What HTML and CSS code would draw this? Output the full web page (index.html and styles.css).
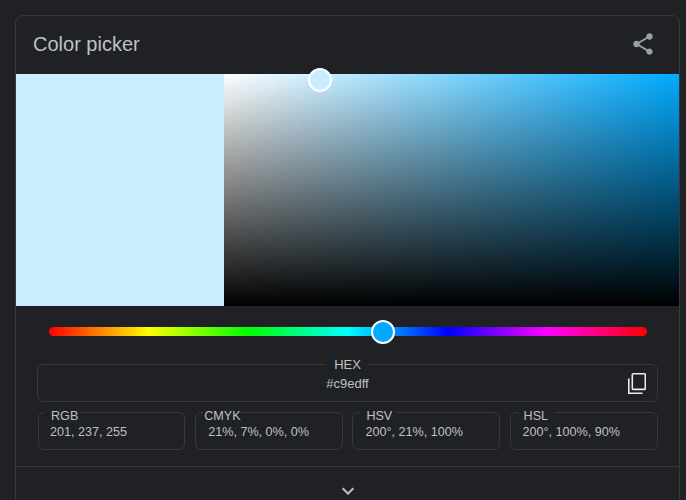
FILE: index.html
```html
<!DOCTYPE html>
<html lang="en">
<head>
<meta charset="utf-8">
<title>Color picker</title>
<link rel="stylesheet" href="styles.css">
</head>
<body>
<section class="card">
  <header class="card-head">
    <h2 class="title">Color picker</h2>
    <svg class="share" viewBox="0 0 24 24"><path d="M18 16.08c-.76 0-1.44.3-1.96.77L8.91 12.7c.05-.23.09-.46.09-.7s-.04-.47-.09-.7l7.05-4.11c.54.5 1.25.81 2.04.81 1.66 0 3-1.34 3-3s-1.34-3-3-3-3 1.34-3 3c0 .24.04.47.09.7L8.04 9.81C7.5 9.31 6.79 9 6 9c-1.66 0-3 1.34-3 3s1.34 3 3 3c.79 0 1.5-.31 2.04-.81l7.12 4.16c-.05.21-.08.43-.08.65 0 1.61 1.31 2.92 2.92 2.92s2.92-1.31 2.92-2.92-1.31-2.92-2.92-2.92z"/></svg>
  </header>
  <div class="picker">
    <div class="swatch"></div>
    <div class="field"><span class="thumb thumb-sat"></span></div>
  </div>
  <div class="hue-wrap">
    <div class="hue"><span class="thumb thumb-hue"></span></div>
  </div>
  <div class="values">
    <fieldset class="box box-hex">
      <legend class="hex-legend">HEX</legend>
      <div class="hex-row">
        <span class="hex-value">#c9edff</span>
        <svg class="copy" viewBox="0 0 18 21"><path d="M.8 5.5v14.7h13.7"/><rect x="4.3" y=".8" width="13" height="15.6" rx=".8"/></svg>
      </div>
    </fieldset>
    <div class="grid">
      <fieldset class="box"><legend class="leg leg-rgb">RGB</legend><div class="val val-rgb">201, 237, 255</div></fieldset>
      <fieldset class="box"><legend class="leg leg-cmyk">CMYK</legend><div class="val">21%, 7%, 0%, 0%</div></fieldset>
      <fieldset class="box"><legend class="leg leg-hsv">HSV</legend><div class="val">200°, 21%, 100%</div></fieldset>
      <fieldset class="box"><legend class="leg leg-hsl">HSL</legend><div class="val">200°, 100%, 90%</div></fieldset>
    </div>
  </div>
  <div class="more">
    <svg class="chev" viewBox="0 0 24 24"><path d="M7.41 8.59 12 13.17l4.59-4.58L18 10l-6 6-6-6z"/></svg>
  </div>
</section>
</body>
</html>
```
FILE: styles.css
```css
* { box-sizing: border-box; }
html, body { height: 100%; }
body {
  margin: 0;
  padding: 15px 6px 0 15px;
  background: #202124;
  color: #bdc1c6;
  font-family: "Liberation Sans", Arial, sans-serif;
  font-size: 13px;
  overflow: hidden;
}
.card {
  border: 1px solid #36383b;
  border-radius: 8px;
  background: #202124;
  height: 520px;
}
.card-head {
  height: 58px;
  display: flex;
  align-items: center;
  justify-content: space-between;
  padding: 0 23px 2px 17px;
}
.title { margin: 0; font-size: 20px; font-weight: 400; color: #bdc1c6; }
.share { width: 26px; height: 26px; fill: #9aa0a6; }
.picker { display: flex; height: 232px; }
.swatch { width: 208px; background: #c9edff; }
.field {
  flex: 1;
  position: relative;
  background: linear-gradient(to top, #000, rgba(0,0,0,0)), linear-gradient(to right, #fff, #00aaff);
}
.thumb {
  position: absolute;
  width: 24px;
  height: 24px;
  border: 2px solid #fff;
  border-radius: 50%;
}
.thumb-sat { left: 84px; top: -6px; background: #c9edff; }
.hue-wrap { padding: 21px 32px 0 33px; }
.hue {
  position: relative;
  height: 9px;
  border-radius: 5px;
  background: linear-gradient(to right, #f00, #ff0 16.67%, #0f0 33.33%, #0ff 50%, #00f 66.67%, #f0f 83.33%, #f00);
}
.thumb-hue { left: 322px; top: -7.5px; background: #00aaff; }
.values { padding: 20px 21px 0 21px; }
.box {
  margin: 0;
  padding: 0;
  min-width: 0;
  border: 1px solid #36383b;
  border-radius: 6px;
}
.hex-legend { margin: 0 auto; padding: 1px 8px 0; line-height: 15px; }
.hex-row {
  display: grid;
  grid-template-columns: 1fr auto 1fr;
  align-items: center;
  height: 33px;
  padding-bottom: 3px;
  margin-top: -4px;
}
.hex-value { grid-column: 2; }
.copy {
  grid-column: 3;
  justify-self: end;
  width: 18px;
  height: 21px;
  margin-right: 11px;
  fill: none;
  stroke: #e8eaed;
  stroke-width: 1.6;
}
.grid {
  display: grid;
  grid-template-columns: repeat(3, 147.4px) 148px;
  column-gap: 9.8px;
  margin: -1px 0 0 1px;
  font-size: 12.6px;
}
.leg { line-height: 15px; }
.leg-rgb { margin-left: 5px; padding: 8px 3px 0 7px; }
.leg-cmyk { margin-left: 7px; padding: 8px 0 0 1px; }
.leg-hsv { margin-left: 7px; padding: 8px 4px 0 6px; }
.leg-hsl { margin-left: 8px; padding: 8px 6px 0 5px; }
.val { height: 25px; line-height: 15px; padding: 1px 0 0 12px; }
.val-rgb { padding-left: 11px; }
.more {
  margin-top: 16px;
  border-top: 1px solid #36383b;
  display: flex;
  justify-content: center;
  padding-top: 12px;
}
.chev { width: 24px; height: 24px; fill: #bdc1c6; }
```
